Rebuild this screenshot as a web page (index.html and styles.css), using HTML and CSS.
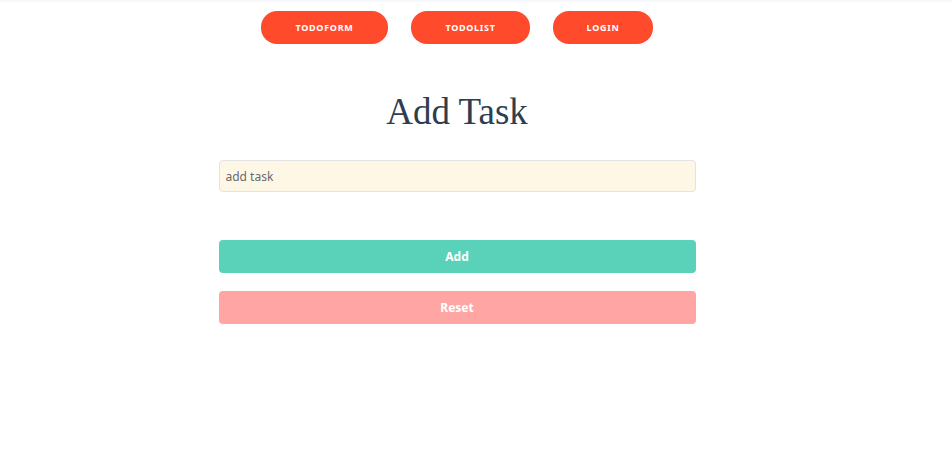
FILE: index.html
```html
<!DOCTYPE html>
<html>
<head>
<meta charset="utf-8">
<link rel="stylesheet" href="styles.css">
</head>
<body>
<div class="topband"></div>
<div class="page">
  <nav class="nav">
    <a class="nav-btn nav-form">TODOFORM</a>
    <a class="nav-btn nav-list">TODOLIST</a>
    <a class="nav-btn nav-login">LOGIN</a>
  </nav>
  <h1 class="title">Add Task</h1>
  <form class="form">
    <input class="task-input" type="text" placeholder="add task">
    <button class="btn btn-add" type="button">Add</button>
    <button class="btn btn-reset" type="button">Reset</button>
  </form>
</div>
</body>
</html>
```

FILE: styles.css
```css
html, body {
  margin: 0;
  padding: 0;
  background: #ffffff;
}
body {
  font-family: "Noto Sans", "Open Sans", sans-serif;
}
.topband {
  height: 2px;
  background: #f8f8fc;
}
.page {
  width: 914px;
  display: flex;
  flex-direction: column;
  align-items: center;
}
.nav {
  display: flex;
  gap: 23px;
  margin-top: 9px;
}
.nav-btn {
  display: flex;
  align-items: center;
  justify-content: center;
  height: 33px;
  border-radius: 16px;
  background: #ff4a2c;
  color: #ffffff;
  font-size: 9px;
  font-weight: 700;
  letter-spacing: 0.7px;
}
.nav-form { width: 127px; }
.nav-list { width: 119px; }
.nav-login { width: 100px; }
.title {
  margin: 47px 0 0;
  font-family: "Liberation Serif", "Times New Roman", serif;
  font-weight: 400;
  font-size: 37px;
  line-height: 42px;
  color: #2c3e50;
}
.form {
  width: 477px;
  display: flex;
  flex-direction: column;
  margin-top: 27px;
}
.task-input {
  box-sizing: border-box;
  height: 32px;
  width: 100%;
  border: 1px solid #e3e3e3;
  border-radius: 4px;
  background: #fff7e6;
  padding: 0 6px;
  font-family: "Noto Sans", "Open Sans", sans-serif;
  font-size: 12px;
  color: #555;
  outline: none;
}
.task-input::placeholder {
  color: #666a70;
}
.btn {
  height: 33px;
  border: none;
  border-radius: 4px;
  color: #ffffff;
  font-family: "Noto Sans", "Open Sans", sans-serif;
  font-size: 12px;
  font-weight: 700;
}
.btn-add {
  margin-top: 48px;
  background: #5ad2b9;
}
.btn-reset {
  margin-top: 18px;
  background: #ffa6a5;
}
```
